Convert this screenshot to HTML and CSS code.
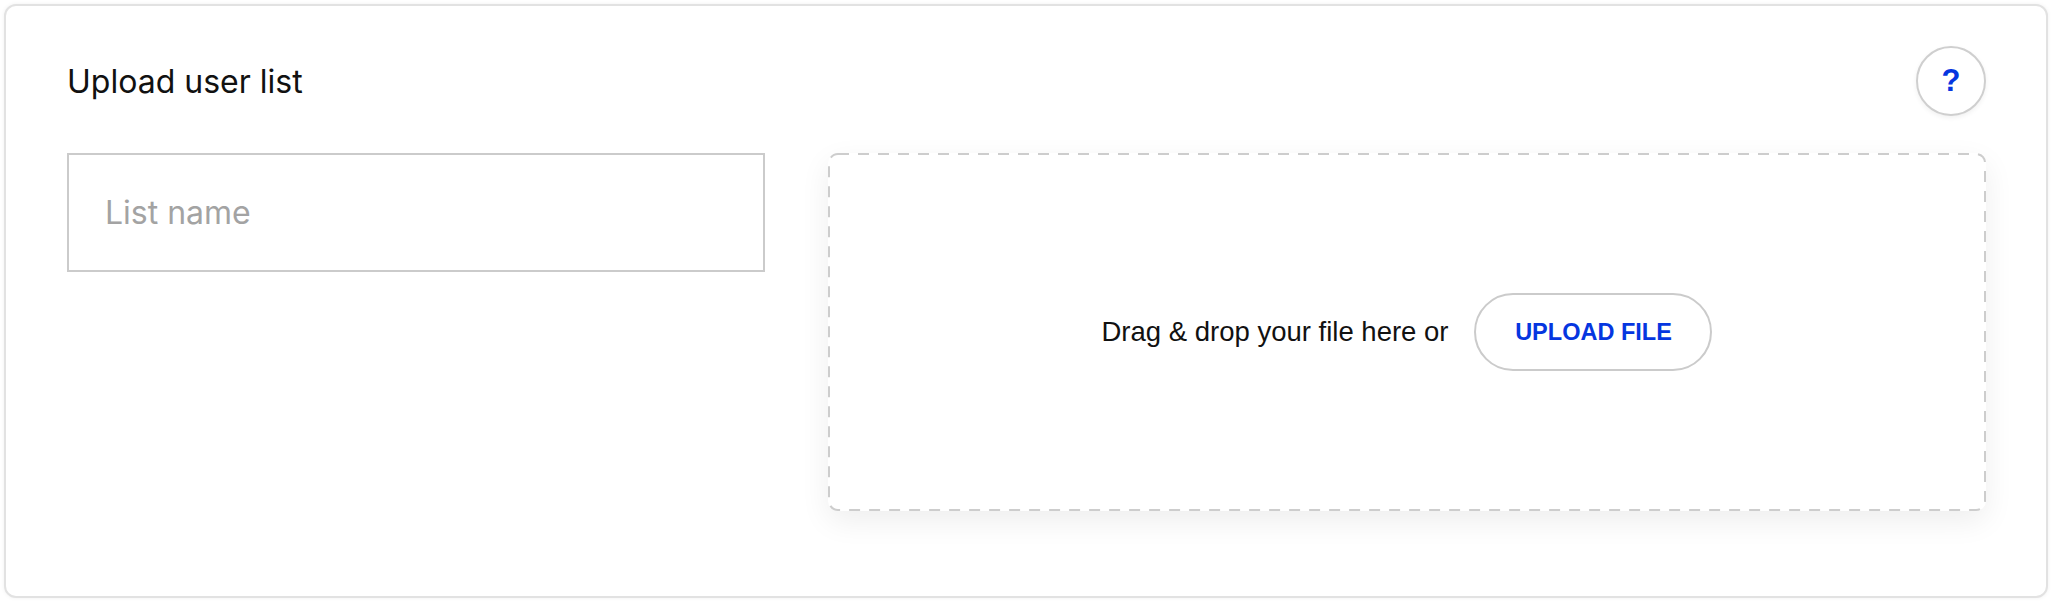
FILE: index.html
```html
<!DOCTYPE html>
<html lang="en">
<head>
    <meta charset="UTF-8">
    <meta name="viewport" content="width=device-width, initial-scale=1.0">
    <title>Upload user list</title>
    <link rel="stylesheet" href="styles.css">
</head>
<body>
    <div class="card">
        <header class="card-header">
            <h1>Upload user list</h1>
            <button class="help-button" type="button" aria-label="Help">?</button>
        </header>

        <div class="upload-form">
            <input class="list-name" type="text" placeholder="List name">

            <div class="dropzone">
                <!-- dashed outline, drawn in svg for longer dashes than border: dashed gives -->
                <svg class="dropzone-border" width="1158" height="358" aria-hidden="true">
                    <rect x="1" y="1" width="1156" height="356" rx="9" ry="9"
                          fill="none" stroke="#cdcdcd" stroke-width="2" stroke-dasharray="11 9"/>
                </svg>
                <span class="dropzone-text">Drag &amp; drop your file here or</span>
                <button class="upload-button" type="button">UPLOAD FILE</button>
            </div>
        </div>
    </div>
</body>
</html>
```

FILE: styles.css
```css
body {
    margin: 0;
    padding: 4px;
    background-color: #fff;
    font-family: 'Inter', 'Liberation Sans', sans-serif;
    color: #111;
}
.card {
    height: 594px;
    box-sizing: border-box;
    padding: 40px 60px 0 61px;
    border: 2px solid #e2e2e2;
    border-radius: 12px;
    box-shadow: 0 0 4px rgba(0, 0, 0, 0.06);
    background-color: #fff;
}
.card-header {
    display: flex;
    justify-content: space-between;
    align-items: center;
    margin-bottom: 37px;
}
h1 {
    margin: 0;
    font-size: 32px;
    font-weight: 400;
    color: #111;
}
.help-button {
    width: 70px;
    height: 70px;
    padding: 0;
    border: 2px solid #cfcfcf;
    border-radius: 50%;
    background-color: #fff;
    box-shadow: 0 2px 5px rgba(0, 0, 0, 0.06);
    font-family: 'Liberation Sans', Arial, sans-serif;
    font-size: 31px;
    font-weight: bold;
    color: #0536e0;
    cursor: pointer;
}
.upload-form {
    display: grid;
    grid-template-columns: 698px 1fr;
    gap: 63px;
    align-items: start;
}
.list-name {
    height: 119px;
    box-sizing: border-box;
    padding: 0 36px;
    border: 2px solid #cbcbcb;
    border-radius: 0;
    font-family: 'Inter', 'Liberation Sans', sans-serif;
    font-size: 32px;
    color: #111;
    outline: none;
}
.list-name::placeholder {
    color: #a3a3a3;
}
.dropzone {
    position: relative;
    height: 358px;
    display: flex;
    justify-content: center;
    align-items: center;
    gap: 26px;
    border-radius: 10px;
    background-color: #fff;
    box-shadow: 0 10px 30px rgba(0, 0, 0, 0.07);
}
.dropzone-border {
    position: absolute;
    top: 0;
    left: 0;
    pointer-events: none;
}
.dropzone-text {
    font-family: 'Liberation Sans', Arial, sans-serif;
    font-size: 27.5px;
    color: #111;
}
.upload-button {
    width: 238px;
    height: 78px;
    border: 2px solid #cbcbcb;
    border-radius: 39px;
    background-color: #fff;
    font-family: 'Liberation Sans', Arial, sans-serif;
    font-size: 23.5px;
    font-weight: bold;
    color: #0536e0;
    cursor: pointer;
}
```
